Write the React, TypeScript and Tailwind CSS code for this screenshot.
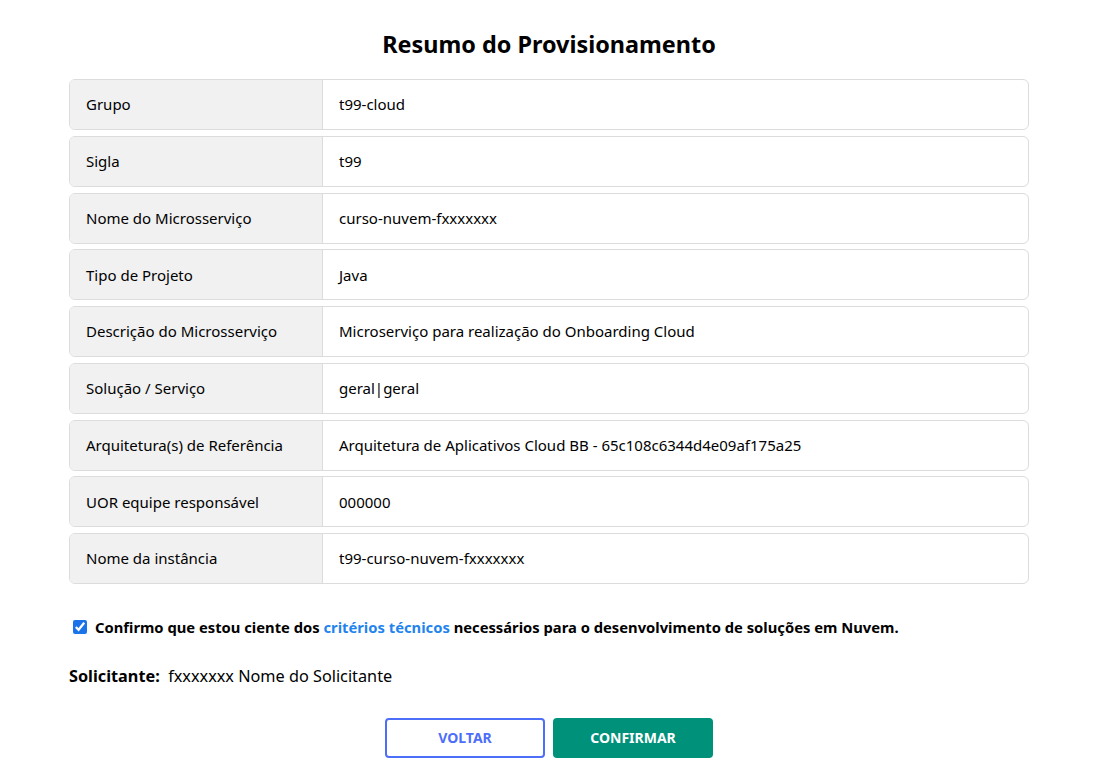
const rows = [
  { label: 'Grupo', value: 't99-cloud' },
  { label: 'Sigla', value: 't99' },
  { label: 'Nome do Microsserviço', value: 'curso-nuvem-fxxxxxxx' },
  { label: 'Tipo de Projeto', value: 'Java' },
  { label: 'Descrição do Microsserviço', value: 'Microserviço para realização do Onboarding Cloud' },
  { label: 'Solução / Serviço', value: 'geral|geral' },
  { label: 'Arquitetura(s) de Referência', value: 'Arquitetura de Aplicativos Cloud BB - 65c108c6344d4e09af175a25' },
  { label: 'UOR equipe responsável', value: '000000' },
  { label: 'Nome da instância', value: 't99-curso-nuvem-fxxxxxxx' },
];

export default function App() {
  return (
    <div className="min-h-screen bg-white text-black font-['Noto_Sans',sans-serif]">
      <div className="ml-[69px] w-[960px] pt-[29px]">
        <h1 className="text-center text-[23.4px] font-bold leading-[30px] mb-[20px]">Resumo do Provisionamento</h1>

        {/* Summary table */}
        <div className="flex flex-col gap-[5.75px]">
          {rows.map((r) => (
            <div key={r.label} className="flex h-[51px] rounded-[6px] border border-[#dcdcdc] overflow-hidden text-[15px]">
              <div className="w-[253px] shrink-0 bg-[#f1f1f1] border-r border-[#dcdcdc] flex items-center pl-[16px]">
                {r.label}
              </div>
              <div className="flex-1 flex items-center pl-[16px]">{r.value}</div>
            </div>
          ))}
        </div>

        {/* Confirmation */}
        <label className="mt-[32px] flex items-center gap-[8px] pl-[4px] text-[14.75px] font-bold">
          <input type="checkbox" defaultChecked className="w-[14px] h-[14px] accent-[#1a73e8]" />
          <span>
            Confirmo que estou ciente dos <a className="text-[#1f84ee]">critérios técnicos</a> necessários para o desenvolvimento de soluções em Nuvem.
          </span>
        </label>

        <p className="mt-[26px] text-[16.25px]">
          <span className="font-bold">Solicitante:</span>&nbsp; fxxxxxxx Nome do Solicitante
        </p>

        <div className="mt-[29px] flex justify-center gap-[8px]">
          <button className="w-[160px] h-[40px] rounded-[4px] border-2 border-[#4d6ef9] text-[#4d6ef9] text-[14px] font-bold">
            VOLTAR
          </button>
          <button className="w-[160px] h-[40px] rounded-[4px] bg-[#00917b] text-white text-[14px] font-bold">
            CONFIRMAR
          </button>
        </div>
      </div>
    </div>
  );
}
